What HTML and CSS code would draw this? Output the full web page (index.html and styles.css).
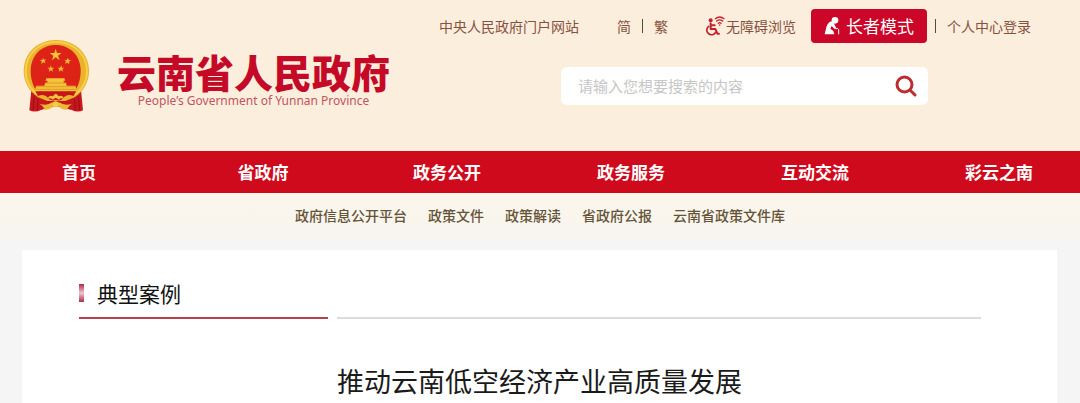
FILE: index.html
```html
<!DOCTYPE html>
<html lang="zh-CN">
<head>
<meta charset="utf-8">
<title>推动云南低空经济产业高质量发展 - 云南省人民政府</title>
<meta name="viewport" content="width=device-width, initial-scale=1">
<link rel="stylesheet" href="styles.css">
</head>
<body>
<header class="header">
  <a class="brand" href="#">
    <svg class="emblem" viewBox="38 28 203 219" aria-hidden="true">
      <path d="M64 182L58 242Q76 250 94 240L138 226L184 240Q202 250 219 242L213 182Z" fill="#c8161d"/>
      <path d="M72 200l-3 42M84 208l-2 34M194 208l2 34M205 200l4 42" stroke="#980f15" stroke-width="3" fill="none"/>
      <path d="M138 31C80 31 41 72 41 124C41 156 56 184 84 203L112 214H166L194 203C222 184 237 156 237 124C237 72 196 31 138 31Z" fill="#e9b32c"/>
      <path d="M138 37C84 37 47 76 47 124C47 152 60 178 84 195M138 37C192 37 231 76 231 124C231 152 218 178 194 195" stroke="#f6d04b" stroke-width="6" fill="none"/>
      <path d="M62 124C62 78 94 46 137 46C180 46 212 78 212 124C212 148 205 170 194 184H80C69 170 62 148 62 124Z" fill="#dd2218"/>
      <path d="M137 57L141 70H155L144 78L149 92L137 83L126 92L130 78L119 70H133Z" fill="#f5c433"/>
      <path d="M99 84l3 6 7-1-5 5 3 7-7-3-6 5 1-8-6-4 8-1z" fill="#f0b62f"/>
      <path d="M174 84l2 6 7 2-6 4 1 8-6-5-7 3 3-7-5-5 7 1z" fill="#f0b62f"/>
      <path d="M122 107l3 7 7 0-5 5 2 7-7-4-6 4 2-7-6-5 8 0z" fill="#f0b62f"/>
      <path d="M154 107l2 7 7 0-6 5 3 7-7-4-7 4 2-7-5-5 7 0z" fill="#f0b62f"/>
      <path d="M109 146H163L166 153H161V159H168L170 168H196L202 184H73L79 168H103L105 159H112V153H106Z" fill="#f4c33a"/>
      <path d="M105 160H169M78 171H197M74 179H201" stroke="#d68520" stroke-width="2"/>
      <path d="M76 185H199L190 199Q171 190 158 207Q148 216 137 210Q126 216 116 207Q103 190 84 199Z" fill="#c8161d"/>
      <path d="M113 207Q117 194 129 200Q137 185 146 200Q158 194 162 207Q151 203 147 210L137 204L128 210Q122 203 113 207Z" fill="#f4c33a"/>
      <path d="M104 214H171L184 240L138 230L92 240Z" fill="#c8161d"/>
      <path d="M89 222Q110 230 127 218L137 224L147 218Q165 230 186 222Q176 228 169 241L156 238L148 231H127L119 238L106 241Q99 228 89 222Z" fill="#edb832"/>
      <circle cx="137" cy="224" r="9" fill="#f5cb45"/>
    </svg>
    <span class="brand-text">
      <span class="brand-name">云南省人民政府</span>
      <span class="brand-en" lang="en">People’s Government of Yunnan Province</span>
    </span>
  </a>
  <div class="tools">
    <div class="top-links">
      <a class="portal" href="#">中央人民政府门户网站</a>
      <div class="pair lang">
        <a href="#">简</a><span class="bar"></span><a href="#">繁</a>
      </div>
      <a class="access" href="#">
        <svg class="access-icon" viewBox="0 0 60 60" fill="none" stroke="#c2202c" stroke-linecap="round" stroke-linejoin="round" aria-hidden="true">
          <circle cx="17" cy="13" r="6" fill="#c2202c" stroke="none"/>
          <path d="M17 22V39H31L37 53H42M18 28H29" stroke-width="6"/>
          <path d="M11 31A14 14 0 1 0 31 50" stroke-width="5"/>
          <path d="M31 8Q44-2 57 8M35 15Q44 8 53 15M40 22Q44 18 48 22" stroke-width="4"/>
          <circle cx="44" cy="27" r="2.5" fill="#c2202c" stroke="none"/>
        </svg>
        无障碍浏览
      </a>
      <div class="pair account">
        <button class="elder" type="button">
          <svg class="elder-icon" viewBox="0 0 48 54" aria-hidden="true">
            <circle cx="33" cy="10" r="10" fill="#fff"/>
            <path d="M22 13Q11 17 7 31L2 52H31L28 42L19 35L23 27L31 35H38L32 24Q31 17 22 13Z" fill="#fff"/>
            <path d="M35 36Q42 31 44 38V52" fill="none" stroke="#fff" stroke-width="3"/>
          </svg>
          长者模式
        </button>
        <span class="bar"></span>
        <a class="login" href="#">个人中心登录</a>
      </div>
    </div>
    <form class="search" role="search">
      <input class="search-input" type="search" placeholder="请输入您想要搜索的内容" aria-label="搜索">
      <button class="search-button" type="button" aria-label="提交搜索">
        <svg class="search-icon" viewBox="0 0 22 22" fill="none" stroke="#bd2d30" stroke-width="3" aria-hidden="true">
          <circle cx="9.500" cy="9.500" r="7.500"/>
          <path d="M15 15L20 20" stroke-linecap="round"/>
        </svg>
      </button>
    </form>
  </div>
</header>
<nav class="nav" aria-label="主导航">
  <ul class="nav-list">
    <li><a href="#">首页</a></li>
    <li><a href="#">省政府</a></li>
    <li><a href="#">政务公开</a></li>
    <li><a href="#">政务服务</a></li>
    <li><a href="#">互动交流</a></li>
    <li><a href="#">彩云之南</a></li>
  </ul>
</nav>
<nav class="subnav" aria-label="政务公开">
  <a href="#">政府信息公开平台</a>
  <a href="#">政策文件</a>
  <a href="#">政策解读</a>
  <a href="#">省政府公报</a>
  <a href="#">云南省政策文件库</a>
</nav>
<main class="card">
  <div class="section-head">
    <h2 class="section-title">典型案例</h2>
    <span class="section-rule"></span>
  </div>
  <h1 class="title">推动云南低空经济产业高质量发展</h1>
</main>
</body>
</html>
```
FILE: styles.css
```css
* {
  box-sizing: border-box;
}

body {
  margin: 0;
  background: #f5f5f5;
  color: #1a1a1a;
  font-family: "Noto Sans CJK SC", "Noto Sans", sans-serif;
  font-size: 14px;
  line-height: 20px;
}

a {
  color: inherit;
  text-decoration: none;
}

button,
input {
  border: 0;
  padding: 0;
  font: inherit;
}

.header {
  display: flex;
  justify-content: space-between;
  align-items: flex-start;
  padding: 9px 49px 39px 22px;
  background: #fceedd;
}

.brand {
  display: flex;
  gap: 26px;
  padding-top: 30px;
}

.emblem {
  width: 69px;
  height: 73px;
}

.brand-text {
  display: flex;
  flex-direction: column;
  align-items: center;
  padding-top: 12px;
}

.brand-name {
  color: #c50a28;
  font-size: 39px;
  font-weight: 900;
  line-height: 40px;
}

.brand-en {
  color: #c25560;
  font-family: "Noto Sans", sans-serif;
  font-size: 12px;
  line-height: 20px;
}

.tools {
  color: #86523f;
}

.top-links {
  display: flex;
  align-items: center;
  height: 34px;
  white-space: nowrap;
}

.pair {
  display: flex;
  align-items: center;
}

.lang {
  gap: 11px;
  margin: 0 37px 0 38px;
}

.bar {
  width: 1px;
  height: 14px;
  background: #4d5038;
}

.access {
  display: flex;
  align-items: center;
  gap: 1px;
  margin-right: 15px;
}

.access-icon {
  width: 20px;
  height: 20px;
}

.account {
  gap: 8px;
}

.elder {
  display: flex;
  justify-content: center;
  align-items: center;
  gap: 6px;
  width: 116px;
  height: 34px;
  border-radius: 4px;
  background: #cb0628;
  color: #fff;
  font-size: 17px;
}

.elder-icon {
  width: 16px;
  height: 18px;
}

.login {
  margin-left: 3px;
}

.search {
  display: flex;
  height: 38px;
  margin: 24px 103px 0 122px;
  border-radius: 6px;
  background: #fff;
}

.search-input {
  flex: 1;
  min-width: 0;
  padding-left: 17px;
  border-radius: 6px;
  background: transparent;
  font-size: 15px;
}

.search-input::placeholder {
  color: #c6c6c6;
}

.search-button {
  display: grid;
  place-items: center;
  width: 44px;
  background: transparent;
}

.search-icon {
  width: 22px;
  height: 22px;
}

.nav {
  overflow: hidden;
  background: #cf0a1c;
}

.nav-list {
  display: grid;
  grid-template-columns: repeat(6, 1fr);
  margin: 0 -11px 0 -13px;
  padding: 0;
  list-style: none;
  color: #fff;
  font-size: 17px;
  font-weight: 700;
  line-height: 42px;
  text-align: center;
}

.subnav {
  display: flex;
  justify-content: center;
  gap: 21px;
  padding-bottom: 2px;
  background: linear-gradient(#faf6ea, #f8f5f0);
  color: #655337;
  font-weight: 500;
  line-height: 45px;
}

.card {
  margin: 10px 23px 0 22px;
  padding: 27px 76px 2px 57px;
  background: #fff;
}

.section-head {
  display: flex;
  align-items: flex-end;
  gap: 9px;
}

.section-title {
  display: flex;
  align-items: center;
  gap: 13px;
  width: 249px;
  margin: 0;
  padding-bottom: 8px;
  border-bottom: 2px solid #b8424c;
  color: #111;
  font-size: 21px;
  font-weight: 400;
  line-height: 32px;
}

.section-title::before {
  content: "";
  width: 5px;
  height: 18px;
  background: linear-gradient(#b02a48, #efc5d0 50%, #b02a48);
}

.section-rule {
  flex: 1;
  height: 2px;
  background: #dcdcdc;
}

.title {
  margin: 42px -19px 0 0;
  font-size: 27px;
  font-weight: 400;
  line-height: 40px;
  text-align: center;
}
```
